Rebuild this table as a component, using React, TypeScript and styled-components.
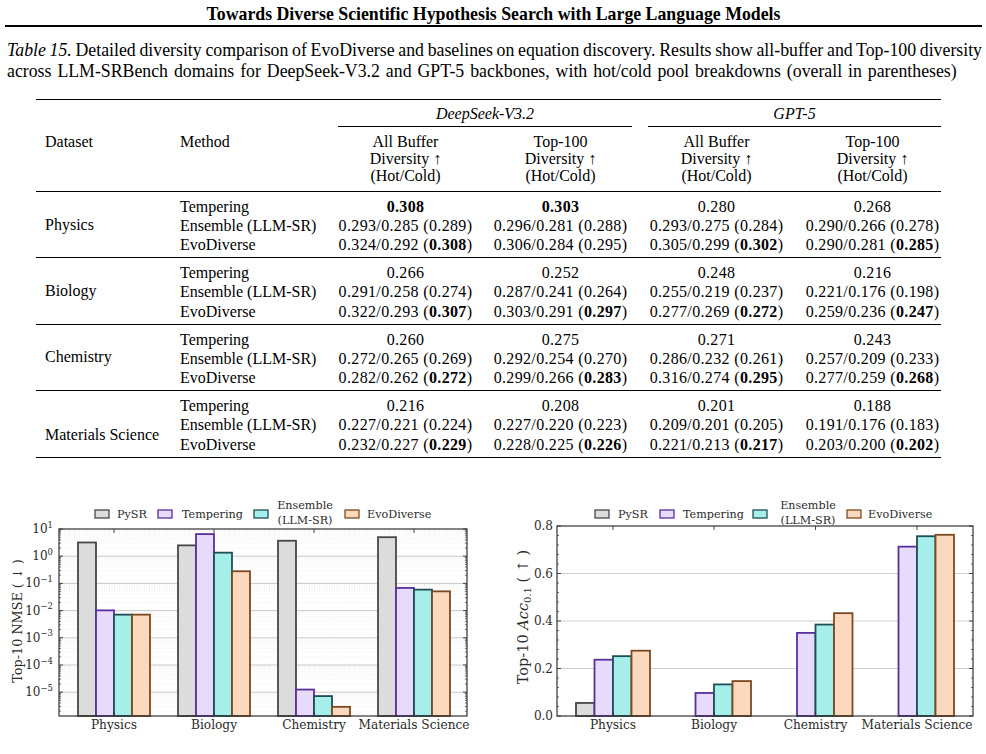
import React from 'react';
import styled, {createGlobalStyle} from 'styled-components';

const GlobalStyle = createGlobalStyle`
    html, body {
        margin: 0;
        padding: 0;
        background: #fff;
    }
`;

const Page = styled.div`
    width: 986px;
    height: 754px;
    overflow: hidden;
    background: #fff;
    color: #000;
    font-family: 'Liberation Serif', 'Times New Roman', serif;
`;

const RunningHead = styled.header`
    margin: 0 4px 0 5px;
    padding: 5px 0 2px;
    border-bottom: 2px solid #000;
    text-align: center;
    font-size: 17.8px;
    font-weight: 700;
    line-height: 18px;
`;

const Caption = styled.div`
    margin: 13px 4px 0 7px;
    font-size: 17.8px;
    line-height: 21px;
`;

const CaptionLine = styled.span<{$justify?: boolean}>`
    display: block;
    text-align: ${(p) => (p.$justify ? 'justify' : 'left')};
    text-align-last: ${(p) => (p.$justify ? 'justify' : 'left')};
    word-spacing: ${(p) => (p.$justify ? '-2px' : '1.5px')};
    white-space: nowrap;
    em {
        font-style: italic;
    }
`;

const Table = styled.table`
    margin: 17px 0 0 36px;
    width: 905px;
    table-layout: fixed;
    border-collapse: separate;
    border-spacing: 0;
    border-top: 1.5px solid #000;
    border-bottom: 1.5px solid #000;
    font-size: 16px;
`;

const GroupHead = styled.th`
    padding: 5px 0 0;
    font-weight: 400;
    font-style: italic;
    line-height: 18px;
    text-align: center;
`;

const GroupRule = styled.div<{$trimRight: number}>`
    margin: 0 ${(p) => p.$trimRight}px 0 10px;
    padding-bottom: 3px;
    border-bottom: 1px solid #000;
`;

const ColHead = styled.th<{$left?: boolean; $shift?: number}>`
    padding: 6px 0 7px ${(p) => p.$shift ?? 0}px;
    font-weight: 400;
    line-height: 17px;
    text-align: ${(p) => (p.$left ? 'left' : 'center')};
    vertical-align: top;
    border-bottom: 1px solid #000;
`;

const Cell = styled.td<{$first?: boolean; $last?: boolean; $rule?: boolean; $num?: boolean; $shift?: number}>`
    padding: ${(p) => (p.$first ? '4.8px' : '0')} 0 ${(p) => (p.$last ? '2.7px' : '0')}
        ${(p) => p.$shift ?? 0}px;
    line-height: 19.3px;
    white-space: nowrap;
    text-align: ${(p) => (p.$num ? 'center' : 'left')};
    letter-spacing: ${(p) => (p.$num ? '0.35px' : 'normal')};
    border-bottom: ${(p) => (p.$last && p.$rule ? '1px solid #000' : 'none')};
`;

const DatasetCell = styled.td<{$rule?: boolean; $drop?: number}>`
    padding: ${(p) => p.$drop ?? 0}px 0 0 9px;
    vertical-align: middle;
    white-space: nowrap;
    border-bottom: ${(p) => (p.$rule ? '1px solid #000' : 'none')};
`;

const Charts = styled.div`
    display: flex;
    margin-top: 40px;
`;

const Chart = styled.svg`
    display: block;
    flex: none;
    font-family: 'DejaVu Serif', serif;
    fill: #2b2b2b;
    font-size: 11.2px;
`;

type Group = {name: string; drop?: number; rows: [string, string[]][]};

const GROUPS: Group[] = [
    {
        name: 'Physics',
        rows: [
            ['Tempering', ['**0.308**', '**0.303**', '0.280', '0.268']],
            ['Ensemble (LLM-SR)', ['0.293/0.285 (0.289)', '0.296/0.281 (0.288)', '0.293/0.275 (0.284)', '0.290/0.266 (0.278)']],
            ['EvoDiverse', ['0.324/0.292 (**0.308**)', '0.306/0.284 (0.295)', '0.305/0.299 (**0.302**)', '0.290/0.281 (**0.285**)']]
        ]
    },
    {
        name: 'Biology',
        rows: [
            ['Tempering', ['0.266', '0.252', '0.248', '0.216']],
            ['Ensemble (LLM-SR)', ['0.291/0.258 (0.274)', '0.287/0.241 (0.264)', '0.255/0.219 (0.237)', '0.221/0.176 (0.198)']],
            ['EvoDiverse', ['0.322/0.293 (**0.307**)', '0.303/0.291 (**0.297**)', '0.277/0.269 (**0.272**)', '0.259/0.236 (**0.247**)']]
        ]
    },
    {
        name: 'Chemistry',
        rows: [
            ['Tempering', ['0.260', '0.275', '0.271', '0.243']],
            ['Ensemble (LLM-SR)', ['0.272/0.265 (0.269)', '0.292/0.254 (0.270)', '0.286/0.232 (0.261)', '0.257/0.209 (0.233)']],
            ['EvoDiverse', ['0.282/0.262 (**0.272**)', '0.299/0.266 (**0.283**)', '0.316/0.274 (**0.295**)', '0.277/0.259 (**0.268**)']]
        ]
    },
    {
        name: 'Materials Science',
        drop: 22,
        rows: [
            ['Tempering', ['0.216', '0.208', '0.201', '0.188']],
            ['Ensemble (LLM-SR)', ['0.227/0.221 (0.224)', '0.227/0.220 (0.223)', '0.209/0.201 (0.205)', '0.191/0.176 (0.183)']],
            ['EvoDiverse', ['0.232/0.227 (**0.229**)', '0.228/0.225 (**0.226**)', '0.221/0.213 (**0.217**)', '0.203/0.200 (**0.202**)']]
        ]
    }
];

function Value({text}: {text: string}) {
    const parts = text.split(/\*\*(.+?)\*\*/);
    return (
        <>
            {parts.map((part, i) => (i % 2 ? <b key={i}>{part}</b> : <React.Fragment key={i}>{part}</React.Fragment>))}
        </>
    );
}

function DiversityTable() {
    return (
        <Table>
            <colgroup>
                <col style={{width: 136}} />
                <col style={{width: 156}} />
                <col style={{width: 155}} />
                <col style={{width: 155}} />
                <col style={{width: 157}} />
                <col style={{width: 146}} />
            </colgroup>
            <thead>
                <tr>
                    <th />
                    <th />
                    <GroupHead colSpan={2}>
                        <GroupRule $trimRight={6}>DeepSeek-V3.2</GroupRule>
                    </GroupHead>
                    <GroupHead colSpan={2}>
                        <GroupRule $trimRight={0}>GPT-5</GroupRule>
                    </GroupHead>
                </tr>
                <tr>
                    <ColHead $left $shift={9}>Dataset</ColHead>
                    <ColHead $left $shift={8}>Method</ColHead>
                    <ColHead>All Buffer<br />Diversity ↑<br />(Hot/Cold)</ColHead>
                    <ColHead>Top-100<br />Diversity ↑<br />(Hot/Cold)</ColHead>
                    <ColHead>All Buffer<br />Diversity ↑<br />(Hot/Cold)</ColHead>
                    <ColHead $shift={9}>Top-100<br />Diversity ↑<br />(Hot/Cold)</ColHead>
                </tr>
            </thead>
            <tbody>
                {GROUPS.map((group, g) => {
                    const rule = g < GROUPS.length - 1;
                    return group.rows.map(([method, values], r) => (
                        <tr key={group.name + method}>
                            {r === 0 && (
                                <DatasetCell rowSpan={3} $rule={rule} $drop={group.drop}>
                                    {group.name}
                                </DatasetCell>
                            )}
                            <Cell $first={r === 0} $last={r === 2} $rule={rule} $shift={8}>
                                {method}
                            </Cell>
                            {values.map((v, c) => (
                                <Cell key={c} $num $first={r === 0} $last={r === 2} $rule={rule} $shift={c === 3 ? 9 : 0}>
                                    <Value text={v} />
                                </Cell>
                            ))}
                        </tr>
                    ));
                })}
            </tbody>
        </Table>
    );
}

const SERIES = [
    {name: 'PySR', fill: '#dcdcdc', edge: '#474747'},
    {name: 'Tempering', fill: '#e7dbfb', edge: '#5b2e9e'},
    {name: 'Ensemble', fill: '#a6eeea', edge: '#1e4e58'},
    {name: 'EvoDiverse', fill: '#fcd8bc', edge: '#7b4a22'}
];

const DOMAINS = ['Physics', 'Biology', 'Chemistry', 'Materials Science'];

const NMSE = [
    [3.2, 0.0102, 0.0071, 0.0071],
    [2.5, 6.5, 1.35, 0.28],
    [3.7, 1.25e-5, 7.2e-6, 2.9e-6],
    [5.0, 0.068, 0.059, 0.051]
];

const ACC = [
    [0.055, 0.237, 0.252, 0.275],
    [0, 0.097, 0.133, 0.147],
    [0, 0.35, 0.385, 0.433],
    [0, 0.713, 0.757, 0.763]
];

function Legend({boxes, labels}: {boxes: number[]; labels: number[]}) {
    return (
        <g>
            {SERIES.map((s, i) => (
                <g key={s.name}>
                    <rect x={boxes[i]} y={12} width={14} height={8} fill={s.fill} stroke={s.edge} strokeWidth={1.3} />
                    {s.name === 'Ensemble' ? (
                        <text x={labels[i]} textAnchor="middle">
                            <tspan x={labels[i]} y={11}>Ensemble</tspan>
                            <tspan x={labels[i]} y={26}>(LLM-SR)</tspan>
                        </text>
                    ) : (
                        <text x={labels[i]} y={20}>{s.name}</text>
                    )}
                </g>
            ))}
        </g>
    );
}

function Bars({
    data,
    centers,
    width,
    base,
    toY
}: {
    data: number[][];
    centers: number[];
    width: number;
    base: number;
    toY: (v: number) => number;
}) {
    return (
        <g>
            {data.map((vals, d) =>
                vals.map((v, s) => {
                    const x = centers[d] + (s - 2) * width;
                    const top = toY(v);
                    return (
                        <rect
                            key={`${d}-${s}`}
                            x={x}
                            y={top}
                            width={width}
                            height={Math.max(0, base - top)}
                            fill={SERIES[s].fill}
                            stroke={SERIES[s].edge}
                            strokeWidth={1.8}
                        />
                    );
                })
            )}
        </g>
    );
}

function NmseChart() {
    const left = 59;
    const right = 467;
    const top = 31;
    const bottom = 218;
    const decade = 27.2;
    const y = (v: number) => top + (1 - Math.log10(v)) * decade;
    const centers = [114, 214, 314, 414];
    const minors: number[] = [];
    for (let k = -6; k <= 0; k++) {
        for (let m = 2; m <= 9; m++) {
            const py = y(m * Math.pow(10, k));
            if (py > top && py < bottom) minors.push(py);
        }
    }
    const exps = [1, 0, -1, -2, -3, -4, -5];
    return (
        <Chart width={493} height={254} viewBox="0 0 493 254">
            <Legend boxes={[95, 158, 254, 345]} labels={[117, 182, 305, 367]} />
            {minors.map((py, i) => (
                <line key={i} x1={left} x2={right} y1={py} y2={py} stroke="#e4e4e4" strokeWidth={0.6} strokeDasharray="1 1.5" />
            ))}
            {exps.slice(1).map((e) => (
                <line key={e} x1={left} x2={right} y1={y(Math.pow(10, e))} y2={y(Math.pow(10, e))} stroke="#c9c9c9" strokeWidth={1} />
            ))}
            <Bars data={NMSE} centers={centers} width={18} base={bottom} toY={y} />
            {minors.map((py, i) => (
                <g key={i} stroke="#333" strokeWidth={0.7}>
                    <line x1={left} x2={left + 2} y1={py} y2={py} />
                    <line x1={right - 2} x2={right} y1={py} y2={py} />
                </g>
            ))}
            {exps.map((e) => {
                const py = y(Math.pow(10, e));
                return (
                    <g key={e}>
                        <line x1={left} x2={left + 4} y1={py} y2={py} stroke="#333" strokeWidth={0.9} />
                        <line x1={right - 4} x2={right} y1={py} y2={py} stroke="#333" strokeWidth={0.9} />
                        <text x={53} y={py + 4} textAnchor="end" fontSize={12}>
                            10
                            <tspan dy={-5.5} fontSize={8.5}>
                                {e < 0 ? `−${-e}` : e}
                            </tspan>
                        </text>
                    </g>
                );
            })}
            {centers.map((cx, i) => (
                <g key={i}>
                    <line x1={cx} x2={cx} y1={bottom} y2={bottom - 4} stroke="#333" strokeWidth={0.9} />
                    <line x1={cx} x2={cx} y1={top} y2={top + 4} stroke="#333" strokeWidth={0.9} />
                    <text x={cx} y={231} textAnchor="middle" fontSize={12.2}>
                        {DOMAINS[i]}
                    </text>
                </g>
            ))}
            <rect x={left} y={top} width={right - left} height={bottom - top} fill="none" stroke="#333" strokeWidth={1.2} />
            <text
                x={17.5}
                y={123}
                fontSize={12.8}
                textAnchor="middle"
                dominantBaseline="central"
                transform="rotate(-90 17.5 123)"
            >
                Top-10 NMSE ( ↓ )
            </text>
        </Chart>
    );
}

function AccChart() {
    const left = 64;
    const right = 480;
    const top = 28;
    const bottom = 218;
    const y = (v: number) => bottom - v * 237.5;
    const centers = [120, 221, 322.5, 424];
    const majors = [0, 0.2, 0.4, 0.6, 0.8];
    const minors: number[] = [];
    for (let i = 1; i < 20; i++) if (i % 5) minors.push(i * 0.04);
    return (
        <Chart width={493} height={254} viewBox="0 0 493 254">
            <Legend boxes={[102, 167, 260, 354]} labels={[125, 190, 315, 375]} />
            {[0.2, 0.4, 0.6].map((v) => (
                <line key={v} x1={left} x2={right} y1={y(v)} y2={y(v)} stroke="#cfcfcf" strokeWidth={1.2} />
            ))}
            <Bars data={ACC} centers={centers} width={18.5} base={bottom} toY={y} />
            {minors.map((v, i) => (
                <g key={i} stroke="#333" strokeWidth={0.7}>
                    <line x1={left} x2={left + 2} y1={y(v)} y2={y(v)} />
                    <line x1={right - 2} x2={right} y1={y(v)} y2={y(v)} />
                </g>
            ))}
            {majors.map((v) => (
                <g key={v}>
                    <line x1={left} x2={left + 4} y1={y(v)} y2={y(v)} stroke="#333" strokeWidth={0.9} />
                    <line x1={right - 4} x2={right} y1={y(v)} y2={y(v)} stroke="#333" strokeWidth={0.9} />
                    <text x={60} y={y(v) + 4} textAnchor="end" fontSize={12}>
                        {v.toFixed(1)}
                    </text>
                </g>
            ))}
            {centers.map((cx, i) => (
                <g key={i}>
                    <line x1={cx} x2={cx} y1={bottom} y2={bottom - 4} stroke="#333" strokeWidth={0.9} />
                    <line x1={cx} x2={cx} y1={top} y2={top + 4} stroke="#333" strokeWidth={0.9} />
                    <text x={cx} y={231} textAnchor="middle" fontSize={12.2}>
                        {DOMAINS[i]}
                    </text>
                </g>
            ))}
            <rect x={left} y={top} width={right - left} height={bottom - top} fill="none" stroke="#333" strokeWidth={1.2} />
            <text x={30} y={119} fontSize={14.5} textAnchor="middle" transform="rotate(-90 30 119)" dy={5}>
                Top-10 <tspan fontStyle="italic">Acc</tspan>
                <tspan fontSize={10} dy={3}>
                    0.1
                </tspan>
                <tspan dy={-3}> ( ↑ )</tspan>
            </text>
        </Chart>
    );
}

export default function App() {
    return (
        <Page>
            <GlobalStyle />
            <RunningHead>Towards Diverse Scientific Hypothesis Search with Large Language Models</RunningHead>
            <Caption>
                <CaptionLine $justify>
                    <em>Table 15.</em> Detailed diversity comparison of EvoDiverse and baselines on equation discovery. Results
                    show all-buffer and Top-100 diversity
                </CaptionLine>
                <CaptionLine>
                    across LLM-SRBench domains for DeepSeek-V3.2 and GPT-5 backbones, with hot/cold pool breakdowns (overall in
                    parentheses)
                </CaptionLine>
            </Caption>
            <DiversityTable />
            <Charts>
                <NmseChart />
                <AccChart />
            </Charts>
        </Page>
    );
}
